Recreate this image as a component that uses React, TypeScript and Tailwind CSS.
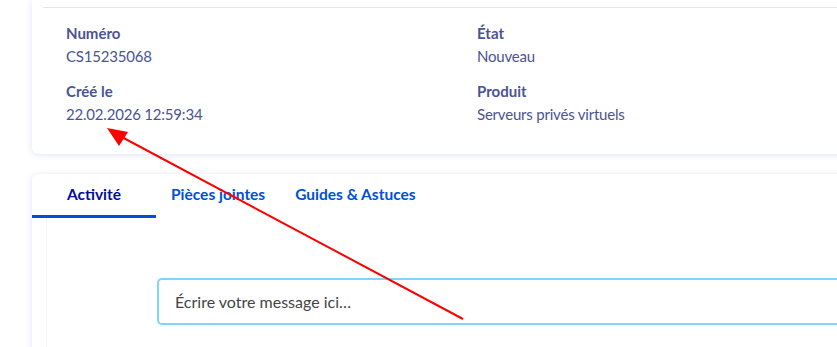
export default function App() {
  const fields = [
    { label: 'Numéro', value: 'CS15235068' },
    { label: 'État', value: 'Nouveau' },
    { label: 'Créé le', value: '22.02.2026 12:59:34' },
    { label: 'Produit', value: 'Serveurs privés virtuels' },
  ];

  return (
    <div
      className="relative w-[837px] h-[347px] overflow-hidden bg-white"
      style={{ fontFamily: 'Lato, "Noto Sans", sans-serif' }}
    >
      <div className="pl-[32px]">
        {/* Details card */}
        <div className="w-[840px] h-[154px] rounded-b-md bg-white shadow-[0_1px_6px_rgba(70,80,190,0.16)]">
          <div className="ml-[11px] pt-[7px]">
            <div className="h-px bg-[#e4e4ea]" />
          </div>
          <div className="grid grid-cols-[411px_1fr] gap-y-[15px] pl-[34px] pt-[15px] text-[#4b5394]">
            {fields.map((f) => (
              <div key={f.label} className="flex flex-col">
                <span className="text-[15px] leading-[20px] font-bold">{f.label}</span>
                <span className="mt-[3px] text-[15px] leading-[20px] tracking-[-0.2px]">{f.value}</span>
              </div>
            ))}
          </div>
        </div>

        {/* Activity card */}
        <div className="mt-[20px] w-[840px] h-[200px] rounded-t-md bg-white shadow-[0_1px_6px_rgba(70,80,190,0.16)]">
          <div className="flex h-[44px] text-[15.5px] font-bold">
            <div className="w-[124px] flex items-center justify-center border-b-[3px] border-[#0050d7] text-[#000e9c] pt-[1px]">
              Activité
            </div>
            <div className="px-[15px] flex items-center text-[#0050d7] pb-[2px]">Pièces jointes</div>
            <div className="px-[15px] flex items-center text-[#0050d7] pb-[2px]">Guides &amp; Astuces</div>
          </div>
          <div className="ml-[14px] h-[156px] border-l border-[#f3f4f8] pt-[60px] pl-[110px]">
            <div className="h-[47px] rounded-l-[5px] border-2 border-r-0 border-[#80d4f7] flex items-center pl-[16px] text-[16px] text-[#444444]">
              Écrire votre message ici…
            </div>
          </div>
        </div>
      </div>

      {/* Annotation arrow */}
      <svg className="absolute inset-0 pointer-events-none" width="837" height="347">
        <line x1="463" y1="319" x2="118" y2="135" stroke="#ff0000" strokeWidth="2" />
        <polygon points="107,128 128,132 119,146" fill="#ff0000" />
      </svg>
    </div>
  );
}
